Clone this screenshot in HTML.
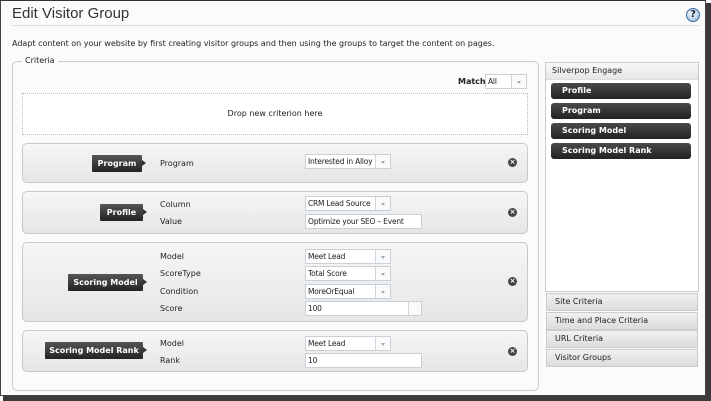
<!DOCTYPE html>
<html><head><style>
*{box-sizing:border-box;margin:0;padding:0}
body{width:711px;height:401px;background:#fff;font-family:"DejaVu Sans","Liberation Sans",sans-serif;font-size:8px;color:#222;position:relative;overflow:hidden}
.a{position:absolute}
.frame{left:0;top:0;width:706px;height:396px;background:#fbfbfb;border:1px solid #444;border-top-color:#333}
.shr{left:706px;top:3px;width:5px;height:398px;background:#3a3a3a}
.shb{left:3px;top:396px;width:708px;height:5px;background:#3a3a3a}
.row{background:linear-gradient(#f6f6f6,#e6e6e6);border:1px solid #c8c8c8;border-radius:5px;left:22px;width:506px}
.badge{background:linear-gradient(#555,#222);color:#fff;font-weight:bold;font-size:8px;height:17px;line-height:17px;text-align:center;border-radius:1px}
.badge:after{content:"";position:absolute;right:-4px;top:5px;border-left:4px solid #333;border-top:3px solid transparent;border-bottom:3px solid transparent}
.lbl{font-size:8px;color:#222}
.sel{background:#fff;border:1px solid #c8d0da;height:15px;width:86px;font-size:7.5px;letter-spacing:-0.2px;line-height:13px;padding-left:2px;white-space:nowrap;overflow:hidden}
.sel:after{content:"";position:absolute;right:0;top:0;width:14px;height:13px;border-left:1px solid #d0d6de;background:#fafafa}
.sel i{position:absolute;right:5px;top:6px;border-top:3px solid #9ab;border-left:2px solid transparent;border-right:2px solid transparent;z-index:2}
.inp{background:#fff;border:1px solid #c8d0da;height:15px;width:117px;font-size:7.5px;letter-spacing:-0.2px;line-height:13px;padding-left:2px;white-space:nowrap}
.x{width:9px;height:9px;border-radius:50%;background:#444;color:#fff;font-size:7px;line-height:9px;text-align:center;font-weight:bold}
.pbtn{left:551px;width:140px;height:16px;border-radius:3px;background:linear-gradient(#4a4a4a,#222);color:#fff;font-weight:bold;font-size:8px;line-height:16px;padding-left:11px}
.acc{left:546px;width:152px;height:18px;background:linear-gradient(#f0f0f0,#dcdcdc);border:1px solid #ccc;font-size:8px;line-height:16px;padding-left:8px;color:#222}
</style></head><body>
<div class="a frame"></div><div class="a shr"></div><div class="a shb"></div>
<div class="a" style="left:12px;top:5px;font-size:15px;color:#333;font-family:'Liberation Sans',sans-serif">Edit Visitor Group</div>
<div class="a" style="left:12px;top:25px;width:688px;height:1px;background:#ddd"></div>
<div class="a" style="left:686px;top:8px;width:14px;height:14px;border-radius:50%;background:radial-gradient(circle at 40% 35%,#fff,#8ab0d8);border:1px solid #3a6aa0;font-size:10px;font-weight:bold;text-align:center;line-height:12px;color:#123">?</div>
<div class="a" style="left:12px;top:39px">Adapt content on your website by first creating visitor groups and then using the groups to target the content on pages.</div>
<div class="a" style="left:12px;top:61px;width:527px;height:330px;border:1px solid #ccc;border-radius:5px"></div>
<div class="a" style="left:22px;top:56px;background:#fbfbfb;padding:0 3px">Criteria</div>
<div class="a" style="left:458px;top:77px;font-weight:bold">Match</div>
<div class="a sel" style="left:485px;top:74px;width:42px">All<i></i></div>
<div class="a" style="left:22px;top:93px;width:506px;height:42px;border:1px dotted #bbb;text-align:center;line-height:40px;background:#fff">Drop new criterion here</div>

<div class="a row" style="top:143px;height:40px"></div>
<div class="a badge" style="left:92px;top:155px;width:50px">Program</div>
<div class="a lbl" style="left:160px;top:159px">Program</div>
<div class="a sel" style="left:305px;top:154px">Interested in Alloy<i></i></div>
<div class="a x" style="left:508px;top:158px">×</div>

<div class="a row" style="top:191px;height:43px"></div>
<div class="a badge" style="left:100px;top:204px;width:43px">Profile</div>
<div class="a lbl" style="left:160px;top:200px">Column</div>
<div class="a lbl" style="left:160px;top:217px">Value</div>
<div class="a sel" style="left:305px;top:196px">CRM Lead Source<i></i></div>
<div class="a inp" style="left:305px;top:214px">Optimize your SEO – Event</div>
<div class="a x" style="left:508px;top:208px">×</div>

<div class="a row" style="top:242px;height:80px"></div>
<div class="a badge" style="left:68px;top:274px;width:75px">Scoring Model</div>
<div class="a lbl" style="left:160px;top:252px">Model</div>
<div class="a lbl" style="left:160px;top:269px">ScoreType</div>
<div class="a lbl" style="left:160px;top:287px">Condition</div>
<div class="a lbl" style="left:160px;top:304px">Score</div>
<div class="a sel" style="left:305px;top:249px">Meet Lead<i></i></div>
<div class="a sel" style="left:305px;top:266px">Total Score<i></i></div>
<div class="a sel" style="left:305px;top:284px">MoreOrEqual<i></i></div>
<div class="a inp" style="left:305px;top:301px">100<span class="a" style="right:0;top:0;width:13px;height:13px;border-left:1px solid #d0d6de;background:#fafafa"></span></div>
<div class="a x" style="left:508px;top:277px">×</div>

<div class="a row" style="top:330px;height:42px"></div>
<div class="a badge" style="left:45px;top:342px;width:98px">Scoring Model Rank</div>
<div class="a lbl" style="left:160px;top:339px">Model</div>
<div class="a lbl" style="left:160px;top:356px">Rank</div>
<div class="a sel" style="left:305px;top:336px">Meet Lead<i></i></div>
<div class="a inp" style="left:305px;top:353px">10</div>
<div class="a x" style="left:508px;top:347px">×</div>

<div class="a" style="left:545px;top:62px;width:154px;height:230px;border:1px solid #ccc;background:#fff"></div>
<div class="a" style="left:546px;top:63px;width:152px;height:17px;background:linear-gradient(#f8f8f8,#e6e6e6);border-bottom:1px solid #ddd;padding-left:6px;line-height:16px">Silverpop Engage</div>
<div class="a pbtn" style="top:83px">Profile</div>
<div class="a pbtn" style="top:103px">Program</div>
<div class="a pbtn" style="top:123px">Scoring Model</div>
<div class="a pbtn" style="top:143px">Scoring Model Rank</div>
<div class="a acc" style="top:293px">Site Criteria</div>
<div class="a acc" style="top:312px">Time and Place Criteria</div>
<div class="a acc" style="top:330px">URL Criteria</div>
<div class="a acc" style="top:349px">Visitor Groups</div>
</body></html>
